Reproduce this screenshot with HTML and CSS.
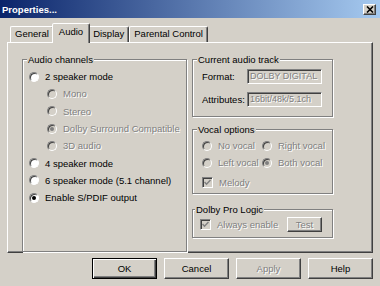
FILE: index.html
```html
<!DOCTYPE html>
<html>
<head>
    <title>Properties...</title>
    <link rel="stylesheet" href="styles.css">
</head>

<body>
<div class="window">
    <div class="titlebar">
        <span class="title">Properties...</span>
        <span class="close">
            <svg width="8" height="7" viewBox="0 0 8 7"><path d="M1 0.5 L7 6.5 M7 0.5 L1 6.5" stroke="#000" stroke-width="1.6" fill="none"/></svg>
        </span>
    </div>

    <div class="tabs">
        <div class="tab">General</div>
        <div class="tab active">Audio</div>
        <div class="tab">Display</div>
        <div class="tab">Parental Control</div>
    </div>

    <div class="panel">
        <fieldset class="group channels">
            <legend>Audio channels</legend>
            <div class="opt"><span class="radio"></span>2 speaker mode</div>
            <div class="opt sub off"><span class="radio"></span>Mono</div>
            <div class="opt sub off"><span class="radio"></span>Stereo</div>
            <div class="opt sub off"><span class="radio on"></span>Dolby Surround Compatible</div>
            <div class="opt sub off"><span class="radio"></span>3D audio</div>
            <div class="opt"><span class="radio"></span>4 speaker mode</div>
            <div class="opt"><span class="radio"></span>6 speaker mode (5.1 channel)</div>
            <div class="opt"><span class="radio on"></span>Enable S/PDIF output</div>
        </fieldset>

        <div class="side">
            <fieldset class="group track">
                <legend>Current audio track</legend>
                <div class="field"><span class="lbl">Format:</span><span class="box">DOLBY DIGITAL</span></div>
                <div class="field"><span class="lbl">Attributes:</span><span class="box">16bit/48k/5.1ch</span></div>
            </fieldset>

            <fieldset class="group vocal">
                <legend>Vocal options</legend>
                <div class="vgrid">
                    <div class="opt off"><span class="radio"></span>No vocal</div>
                    <div class="opt off"><span class="radio"></span>Right vocal</div>
                    <div class="opt off"><span class="radio"></span>Left vocal</div>
                    <div class="opt off"><span class="radio on"></span>Both vocal</div>
                </div>
                <div class="opt off melody">
                    <span class="check"><svg width="7" height="7" viewBox="0 0 7 7"><path d="M0.5 3 L2.5 5.2 L6.5 1" stroke="#808080" stroke-width="1.5" fill="none"/></svg></span>Melody
                </div>
            </fieldset>

            <fieldset class="group logic">
                <legend>Dolby Pro Logic</legend>
                <div class="logic-row">
                    <div class="opt off">
                        <span class="check"><svg width="7" height="7" viewBox="0 0 7 7"><path d="M0.5 3 L2.5 5.2 L6.5 1" stroke="#808080" stroke-width="1.5" fill="none"/></svg></span>Always enable
                    </div>
                    <button class="btn small off">Test</button>
                </div>
            </fieldset>
        </div>
    </div>

    <div class="buttons">
        <button class="btn default">OK</button>
        <button class="btn">Cancel</button>
        <button class="btn off">Apply</button>
        <button class="btn">Help</button>
    </div>
</div>
</body>
</html>
```

FILE: styles.css
```css
body {
    margin: 0;
    background-color: #D4D0C8;
    color: #000;
    font-family: "Liberation Sans", Arial, sans-serif;
    font-size: 9.5px;
    line-height: 11px;
}

.window {
    width: 380px;
    height: 286px;
}

.titlebar {
    height: 18px;
    box-sizing: border-box;
    padding: 0 4px 0 2px;
    display: flex;
    align-items: center;
    justify-content: space-between;
    background: linear-gradient(to right, #0A246A, #A6CAF0);
}

.title {
    color: #fff;
    font-weight: bold;
    font-size: 9.5px;
}

.close {
    width: 13px;
    height: 11px;
    box-sizing: border-box;
    background-color: #D4D0C8;
    border: 1px solid;
    border-color: #fff #404040 #404040 #fff;
    box-shadow: inset -1px -1px 0 #808080;
    display: flex;
    align-items: center;
    justify-content: center;
}

/* tab strip */
.tabs {
    height: 24px;
    padding-left: 10px;
    display: flex;
    align-items: flex-end;
}

.tab {
    height: 16px;
    box-sizing: border-box;
    padding: 0 4px;
    border: 1px solid;
    border-bottom: none;
    border-color: #fff #404040 transparent #fff;
    box-shadow: inset -1px 0 0 #808080;
    border-radius: 2px 2px 0 0;
    line-height: 14px;
}

.tab.active {
    height: 20px;
    margin: 0 -2px -1px;
    padding: 0 6px;
    line-height: 15px;
    position: relative;
    z-index: 1;
    background-color: #D4D0C8;
}

.panel {
    height: 211px;
    box-sizing: border-box;
    margin: 0 7px;
    padding: 11px 0 0 14px;
    border: 1px solid;
    border-color: #fff #404040 #404040 #fff;
    box-shadow: inset -1px -1px 0 #808080;
    display: grid;
    grid-template-columns: 165px 141px;
    column-gap: 5px;
    align-items: start;
}

/* group boxes */
.group {
    margin: 0;
    min-width: 0;
    border: 1px solid #808080;
    box-shadow: 1px 1px 0 #fff, inset 1px 1px 0 #fff;
}

.group legend {
    padding: 0 1px;
    background-color: #D4D0C8;
    line-height: 11px;
}

.channels {
    align-self: stretch;
    padding: 3px 6px 0 6px;
}

.channels legend {
    margin-left: -2px;
}

.side legend {
    margin-left: -5px;
}

.track {
    padding: 4px 0 9px 9px;
}

.vocal {
    margin-top: 7px;
    padding: 2px 0 2px 9px;
}

.logic {
    margin-top: 10px;
    padding: 2.5px 10px 5px 7px;
}

.opt {
    height: 17.3px;
    display: flex;
    align-items: center;
    gap: 6px;
    white-space: nowrap;
}

.opt.sub {
    padding-left: 18px;
}

.off {
    color: #808080;
    text-shadow: 1px 1px 0 #fff;
}

.radio {
    width: 10px;
    height: 10px;
    flex: none;
    box-sizing: border-box;
    border-radius: 50%;
    border: 1px solid;
    border-color: #808080 #fff #fff #808080;
    background-color: #fff;
    box-shadow: inset 1px 1px 0 #404040;
    display: flex;
    align-items: center;
    justify-content: center;
}

.off .radio {
    background-color: #D4D0C8;
}

.radio.on::after {
    content: "";
    width: 4px;
    height: 4px;
    border-radius: 50%;
    background-color: #000;
}

.off .radio.on::after {
    background-color: #808080;
}

.check {
    width: 11px;
    height: 11px;
    flex: none;
    box-sizing: border-box;
    border: 1px solid;
    border-color: #808080 #fff #fff #808080;
    box-shadow: inset 1px 1px 0 #404040;
    background-color: #D4D0C8;
    display: flex;
    align-items: center;
    justify-content: center;
}

.field {
    height: 15px;
    display: flex;
    align-items: center;
}

.field + .field {
    margin-top: 8px;
}

.lbl {
    width: 45px;
}

.box {
    width: 75px;
    height: 15px;
    box-sizing: border-box;
    padding-left: 2px;
    border: 1px solid;
    border-color: #808080 #fff #fff #808080;
    box-shadow: inset 1px 1px 0 #404040;
    color: #808080;
    text-shadow: 1px 1px 0 #fff;
    font-size: 9px;
    line-height: 13px;
    white-space: nowrap;
    overflow: hidden;
}

.vgrid {
    display: grid;
    grid-template-columns: 60px auto;
}

.melody {
    margin-top: 2px;
}

.logic-row {
    height: 15px;
    display: flex;
    align-items: center;
    justify-content: space-between;
}

.logic-row .opt {
    height: 15px;
}

/* buttons */
.btn {
    width: 65px;
    height: 21px;
    padding: 0;
    background-color: #D4D0C8;
    border: 1px solid;
    border-color: #fff #404040 #404040 #fff;
    box-shadow: inset -1px -1px 0 #808080;
    font-family: inherit;
    font-size: 9.5px;
    color: #000;
}

.btn.off {
    color: #808080;
    text-shadow: 1px 1px 0 #fff;
}

.btn.small {
    width: 35px;
    height: 15px;
}

.btn.default {
    border-color: #000;
    box-shadow: inset 1px 1px 0 #fff, inset -1px -1px 0 #404040, inset -2px -2px 0 #808080;
}

.buttons {
    margin-top: 5px;
    padding-right: 7px;
    display: flex;
    justify-content: flex-end;
    gap: 7px;
}
```
